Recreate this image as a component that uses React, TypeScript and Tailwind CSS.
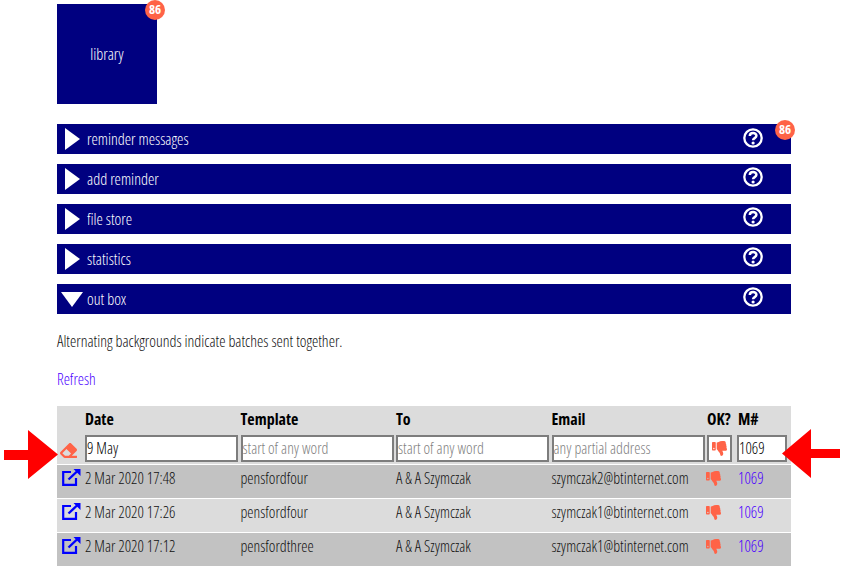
import { FaEraser, FaThumbsDown } from "react-icons/fa";

const font = { fontFamily: '"Open Sans", sans-serif', fontStretch: "75%" };

const bars = [
  { label: "reminder messages", badge: true },
  { label: "add reminder" },
  { label: "file store" },
  { label: "statistics" },
  { label: "out box", open: true },
];

const rows = [
  { date: "2 Mar 2020 17:48", template: "pensfordfour", email: "szymczak2@btinternet.com", bg: "bg-[#c2c2c2]" },
  { date: "2 Mar 2020 17:26", template: "pensfordfour", email: "szymczak1@btinternet.com", bg: "bg-[#dcdcdc]" },
  { date: "2 Mar 2020 17:12", template: "pensfordthree", email: "szymczak1@btinternet.com", bg: "bg-[#c2c2c2]" },
];

const cols = "grid grid-cols-[28px_155.5px_155.5px_155.5px_155.5px_30px_54px]";

function Badge() {
  return (
    <span className="absolute flex h-5 w-5 items-center justify-center rounded-full bg-[#ff6347] text-[13px] font-bold text-white">
      86
    </span>
  );
}

function Help() {
  return (
    <svg width="20" height="20" viewBox="0 0 20 20" className="shrink-0">
      <circle cx="10" cy="10" r="8.7" fill="none" stroke="white" strokeWidth="2.3" />
      <path d="M6.8 8 C6.8 3.9 13.4 4 13.4 7.8 C13.4 10.2 10.1 10 10.1 12.2" fill="none" stroke="white" strokeWidth="2.5" />
      <circle cx="10.1" cy="15" r="1.6" fill="white" />
    </svg>
  );
}

function EditIcon() {
  return (
    <svg width="19" height="17" viewBox="0 0 19 17">
      <path d="M9 3 H1.2 V15.8 H14 V9" fill="none" stroke="#0000ff" strokeWidth="2.2" />
      <path d="M6.5 10.5 L15.5 2" fill="none" stroke="#0000ff" strokeWidth="2.4" />
      <path d="M11.5 0 H18.5 V7 Z" fill="#0000ff" />
    </svg>
  );
}

function FilterInput({ value, placeholder, wide = true }: { value?: string; placeholder?: string; wide?: boolean }) {
  return (
    <input
      readOnly
      value={value}
      placeholder={placeholder}
      style={font}
      className={`h-[27px] border-2 border-[#7d7d7d] bg-white px-0 pb-[2px] text-[15.7px] font-light text-black outline-none placeholder:text-[#808080] ${wide ? "w-[153px]" : "w-[50px]"}`}
    />
  );
}

export default function App() {
  return (
    <div style={font} className="relative h-[577px] overflow-hidden bg-white pl-[57px] pr-[59px] pt-1 font-light text-[#111]">
      <div className="relative flex h-[100px] w-[100px] items-center justify-center bg-[#000080] text-[16px] text-white">
        library
        <span className="absolute -top-[4px] left-[88px] block h-0 w-0">
          <Badge />
        </span>
      </div>

      <div className="mt-5 flex flex-col gap-2.5">
        {bars.map((b) => (
          <div key={b.label} className="relative flex h-[30px] items-center bg-[#000080] text-[16px] text-white">
            <span className="flex w-[30px] justify-center">
              {b.open ? (
                <span className="ml-[-1px] h-0 w-0 border-x-[11px] border-t-[15px] border-x-transparent border-t-white" />
              ) : (
                <span className="ml-[1px] h-0 w-0 border-y-[11px] border-l-[15px] border-y-transparent border-l-white" />
              )}
            </span>
            <span>{b.label}</span>
            <span className={`ml-auto mr-[28px] flex ${b.badge ? "mb-[2px]" : "mb-[4px]"}`}>
              <Help />
            </span>
            {b.badge && (
              <span className="absolute -top-[4px] left-[718px] block h-0 w-0">
                <Badge />
              </span>
            )}
          </div>
        ))}
      </div>

      <p className="mt-4 h-[22px] text-[15.9px] leading-[22px]">Alternating backgrounds indicate batches sent together.</p>
      <a className="mt-4 block h-[22px] text-[15.7px] leading-[22px] text-[#4a00ff]">Refresh</a>

      <div className="mt-4 text-[15.7px]">
        <div className="bg-[#dcdcdc]">
          <div className={`${cols} h-[29px] items-center pb-[4px] text-[16px] font-bold text-black`}>
            <span />
            <span>Date</span>
            <span>Template</span>
            <span>To</span>
            <span>Email</span>
            <span>OK?</span>
            <span className="pl-px">M#</span>
          </div>
          <div className={`${cols} h-[29px] items-start`}>
            <span className="mt-[7px] flex justify-center pr-[6px] text-[#ff6347]">
              <FaEraser size={17} />
            </span>
            <FilterInput value="9 May" />
            <FilterInput placeholder="start of any word" />
            <FilterInput placeholder="start of any word" />
            <FilterInput placeholder="any partial address" />
            <span className="flex h-[27px] w-[25px] items-center justify-center border-2 border-[#7d7d7d] bg-white text-[#ff6347]">
              <FaThumbsDown size={15} />
            </span>
            <FilterInput value="1069" wide={false} />
          </div>
        </div>
        {rows.map((r, i) => (
          <div key={i} className={`${cols} mt-px h-[33px] pt-[2px] ${r.bg}`}>
            <span className="pl-[5px] pt-[2px]">
              <EditIcon />
            </span>
            <span>{r.date}</span>
            <span>{r.template}</span>
            <span>A &amp; A Szymczak</span>
            <span>{r.email}</span>
            <span className="-ml-px pt-[4px] text-[#ff6347]">
              <FaThumbsDown size={15} />
            </span>
            <span className="pl-px text-[#4a00ff]">1069</span>
          </div>
        ))}
      </div>

      <svg width="56" height="50" viewBox="0 0 56 50" className="absolute left-[4px] top-[430px]">
        <path d="M0 20 H24 V0 L54 24.5 L24 49 V30 H0 Z" fill="#ff0000" />
      </svg>
      <svg width="60" height="50" viewBox="0 0 60 50" className="absolute left-[781px] top-[429px]">
        <path d="M59 20 H30 V0 L1 24.5 L30 49 V29 H59 Z" fill="#ff0000" />
      </svg>
    </div>
  );
}
